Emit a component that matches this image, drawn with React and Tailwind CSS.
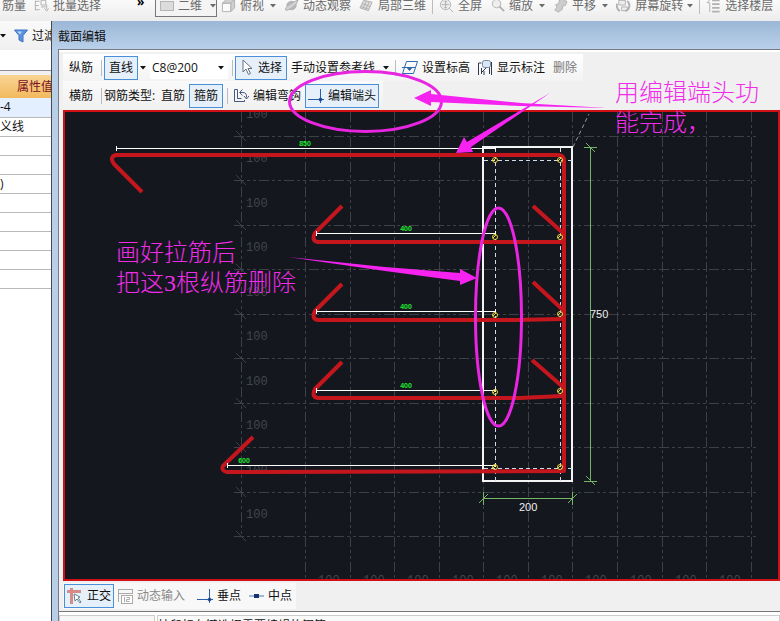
const GRID_X = [305, 350, 394, 439, 483, 528, 572, 617, 662, 706, 751];
const GRID_Y = [136, 180, 225, 269, 314, 358, 403, 447, 492, 536];

const NODES = [
  [495, 160], [560, 160], [495, 237], [560, 237], [495, 315],
  [560, 314], [495, 392], [560, 391], [495, 467], [560, 467],
];

// [x start, y, label x, label]
const DIMS = [
  [117, 149, 305, "850"],
  [317, 234, 406, "400"],
  [317, 312, 406, "400"],
  [317, 391, 406, "400"],
  [228, 466, 244, "600"],
];

const REBARS = [
  "M142 192 L114 164 Q109 157 116 155 H558 Q564 155 564 161 V471 L227 472 Q221 471 223 466 L253 437",
  "M342 206 L315 233 Q311 241 318 242 H562",
  "M342 284 L315 311 Q311 319 318 320 H515 L562 319",
  "M342 362 L315 389 Q311 397 318 398 H520 L562 396",
  "M533 206 L563 233",
  "M533 282 L563 310",
  "M532 360 L563 387",
];

const PROPS = ["", "", ")", "", "", "", "", ""];

// grey view-toolbar icons, 16x16
const ICONS = {
  batch: <path d="M1.500 3v10M1 3.500h5M1 8h4M1 12.500h5M7.500 2.500h5v5h-5zM7.500 9.500h5M13.500 7v5M11 11l2.500 3 2-3" />,
  cube: <><path d="M1.500 5.500h9v9h-9z" fill="#fafafa" /><path d="M1.500 5.500l4-4h9l-4 4zM10.500 14.500l4-4v-9l-4 4z" fill="#cfcfcf" /></>,
  orbit: <><ellipse cx="8" cy="8" rx="5" ry="4.500" fill="#b8b8b8" /><path d="M2 13Q0 11 6 7T15 2Q15 6 9 10T2 13z" fill="#d0d0d0" /></>,
  part: <><path d="M5 2.500l9 2-4 9-9-3z" fill="#dedede" /><path d="M8 3L4 11.500M11 4L7 12.500M3 6l9 3M1.500 9l9 3" /></>,
  full: <><circle cx="7" cy="7" r="5.500" fill="#eee" /><path d="M7 3v8M3 7h8M5.500 4.500L7 3l1.500 1.500M5.500 9.500L7 11l1.500-1.500M11 11l4 4" /></>,
  zoom: <><circle cx="7" cy="6" r="4.500" fill="#eee" /><path d="M10 9l5 5" strokeWidth="2" /></>,
  pan: <path d="M2 13l2-3-1-3 3-1 1-4 3-1 5 3-2 4-3 1v3l-4 3z" fill="#cdcdcd" />,
  rotate: <><path d="M3 2.500h7v5H3zM6 9.500h6v4H6z" fill="#eee" /><path d="M12 3q4 4 1 9l-3 2M1 6q-1 5 3 8" strokeWidth="2" /></>,
  floor: <><path d="M6.500 2.500h8M6.500 6.500h8M6.500 10.500h8M6.500 14.500h8" strokeWidth="2" /><path d="M4 2L1 5h3v10" /></>,
};

function ViewIcon({ name }) {
  return (
    <svg className="mr-1 shrink-0" width="15" height="15" viewBox="0 0 16 16" fill="none" stroke="#b0b0b0">
      {ICONS[name]}
    </svg>
  );
}

function Caret({ className = "" }) {
  return (
    <svg className={`shrink-0 ${className}`} width="6" height="4" viewBox="0 0 6 4">
      <path d="M0 0h6L3 3.500z" fill="currentColor" />
    </svg>
  );
}

function Sep({ className = "" }) {
  return <div className={`w-px shrink-0 bg-[#b9bcc2] ${className}`} />;
}

function Tool({ children, active, className = "" }) {
  return (
    <button type="button"
      className={`flex h-[24px] shrink-0 items-center whitespace-nowrap
        ${active ? "border border-[#4a90d9] bg-[#e6f0fa]" : ""} ${className}`}>
      {children}
    </button>
  );
}

function TopBar() {
  return (
    <div className="flex h-[21px] items-start overflow-hidden bg-gradient-to-b from-[#fafafa] to-[#ececed] text-[#6b6b6b]">
      <div className="-mt-1.5 flex h-[23px] shrink-0 items-center whitespace-nowrap">
        <button type="button" className="ml-0.5">筋量</button>
        <button type="button" className="ml-2 flex items-center"><ViewIcon name="batch" />批量选择</button>
        <span className="ml-9 w-[18px] self-start font-bold text-black">»</span>
        <button type="button" className="flex h-[23px] w-[62px] items-center border border-[#777] bg-[#f4f4f4] pl-1">
          <span className="mr-1 h-[10px] w-[14px] border border-[#b5b5b5] bg-[#dcdcdc]" />
          二维
          <Caret className="ml-2" />
        </button>
        <button type="button" className="ml-1 flex items-center"><ViewIcon name="cube" />俯视<Caret className="ml-1.5" /></button>
        <button type="button" className="ml-2 flex items-center"><ViewIcon name="orbit" />动态观察</button>
        <button type="button" className="ml-2 flex items-center"><ViewIcon name="part" />局部三维</button>
        <Sep className="ml-1.5 h-[16px]" />
        <button type="button" className="ml-1.5 flex items-center"><ViewIcon name="full" />全屏</button>
        <button type="button" className="ml-2 flex items-center"><ViewIcon name="zoom" />缩放<Caret className="ml-1.5" /></button>
        <button type="button" className="ml-2 flex items-center"><ViewIcon name="pan" />平移<Caret className="ml-1.5" /></button>
        <button type="button" className="ml-2 flex items-center"><ViewIcon name="rotate" />屏幕旋转<Caret className="ml-1" /></button>
        <Sep className="ml-1.5 h-[16px]" />
        <button type="button" className="ml-1.5 flex items-center"><ViewIcon name="floor" />选择楼层</button>
      </div>
    </div>
  );
}

function PropertyPanel() {
  return (
    <aside className="w-[51px] shrink-0 overflow-hidden whitespace-nowrap bg-white">
      <div className="flex h-[29px] items-center bg-gradient-to-b from-[#fafafa] to-[#f0f0f0]">
        <Caret />
        <button type="button" className="ml-2 flex shrink-0 items-center">
          <svg className="mr-1 shrink-0" width="14" height="14" viewBox="0 0 14 14">
            <path d="M.500 1h13L9 6.500V13l-4-2V6.500z" fill="#5d93dd" stroke="#3c74c4" />
            <path d="M3 2.500h5L6 5.500z" fill="#b9d5f7" />
          </svg>
          过滤
        </button>
      </div>
      <div className="h-[21px] border-b border-[#8d8d99]" />
      <div className="h-[4px] bg-[#f0f0f0]" />
      <table className="w-full border-collapse">
        <thead>
          <tr className="h-[23px] bg-gradient-to-b from-[#f9d594] to-[#f2b95c]">
            <th className="p-0 pl-[17px] text-left font-normal text-[#7a1020]"><div className="w-[34px] overflow-hidden">属性值</div></th>
          </tr>
        </thead>
        <tbody>
          <tr className="h-[19px] border-b border-[#b9b9b9] bg-[#e3efff]"><td className="p-0 leading-[16px]">-4</td></tr>
          <tr className="h-[19px] border-b border-[#b9b9b9]"><td className="p-0 leading-[16px]">义线</td></tr>
          {PROPS.map((p, i) => (
            <tr key={i} className="h-[19px] border-b border-[#b9b9b9]"><td className="p-0 leading-[16px]">{p}</td></tr>
          ))}
        </tbody>
      </table>
    </aside>
  );
}

function PerpIcon({ className = "" }) {
  return (
    <svg className={`shrink-0 ${className}`} width="16" height="16" viewBox="0 0 16 16" fill="none" stroke="#2a5ca8">
      <path d="M0 11.500h16M12.500 1v14" />
      <circle cx="12.500" cy="11.500" r="1.500" fill="#173e7d" />
    </svg>
  );
}

function DialogTools() {
  return (
    <div className="bg-[#f0f0f0] pl-1 pt-0.5">
      <div className="flex h-[27px] w-fit items-center bg-gradient-to-b from-white to-[#f3f3f3] pr-1.5">
        <button type="button" className="ml-1.5 shrink-0">纵筋</button>
        <Sep className="ml-2 h-[16px]" />
        <Tool active className="ml-0.5 px-1">直线</Tool>
        <Caret className="ml-0.5" />
        <div className="ml-1 flex h-[22px] w-[78px] items-center bg-white">
          <select aria-label="钢筋规格" className="w-full appearance-none bg-transparent pl-0.5 outline-none">
            <option>C8@200</option>
          </select>
          <Caret className="mr-1" />
        </div>
        <Sep className="ml-1 h-[16px]" />
        <Tool active className="ml-0.5 px-1">
          <svg className="mr-1 shrink-0" width="14" height="17" viewBox="0 0 14 17" fill="#fff" stroke="#69717c">
            <path d="M3 1v12l3-3 2.500 5.500 2-1-2.500-5h4z" />
          </svg>
          选择
        </Tool>
        <Tool className="ml-1">手动设置参考线<Caret className="ml-2" /></Tool>
        <Sep className="ml-1.5 h-[16px]" />
        <Tool className="ml-1.5">
          <svg className="mr-1 shrink-0" width="16" height="16" viewBox="0 0 16 16" fill="none" stroke="#2f69ad">
            <path d="M4.500 1.500h11l-4 12h-11zM0 7.500h13" />
            <path d="M5 7.500h5l-2.500 3z" fill="#2f69ad" />
          </svg>
          设置标高
        </Tool>
        <Tool className="ml-2">
          <svg className="mr-1 shrink-0" width="15" height="17" viewBox="0 0 15 17" fill="none" stroke="#303a4d">
            <path d="M.500 16V4h3M3.500 15V9M13.500 16V3M11.500 7v8M3 14l6-6M6 16v-4" />
            <rect x="4.500" y="1.500" width="8" height="7" rx="2" fill="#dce6f2" stroke="#6f89aa" />
          </svg>
          显示标注
        </Tool>
        <Tool className="ml-2 text-[#777]">删除</Tool>
      </div>
      <div className="flex h-[29px] w-fit items-center bg-gradient-to-b from-[#fafafa] to-[#f0f0f0] pr-1">
        <button type="button" className="ml-1.5 shrink-0">横筋</button>
        <Sep className="ml-2 h-[16px]" />
        <span className="ml-0.5 w-[57px] shrink-0 whitespace-nowrap">钢筋类型:</span>
        <Tool>直筋</Tool>
        <Tool active className="ml-1 px-1">箍筋</Tool>
        <Sep className="ml-1 h-[16px]" />
        <Tool className="ml-1.5">
          <svg className="mr-1 shrink-0" width="15" height="15" viewBox="0 0 15 15" fill="none" stroke="#44597f">
            <path d="M3.500 1.500h-3v12h10V12M3.500 1.500v9h4" />
            <path d="M6 4.500h3q4 0 3.500 5M8.500 1.500L5.500 4.500l3 3M10 8l2.500 3L15 8" />
          </svg>
          编辑弯钩
        </Tool>
        <Tool active className="ml-1 px-0.5"><PerpIcon className="mr-1" />编辑端头</Tool>
      </div>
    </div>
  );
}

function SectionCanvas() {
  return (
    <div className="ml-1 border-2 border-[#d01015] bg-[#14171e]">
      <svg className="block h-auto w-full" viewBox="65 112 713 467" fill="none">
        <g stroke="#3d4046" strokeDasharray="10 3 3 3 3 3">
          <path d="M241.500 112V536" />
          {GRID_X.map(x => <path key={x} d={`M${x + 0.5} 112V579`} />)}
          {GRID_Y.map(y => <path key={y} d={`M234 ${y + 0.5}H757`} />)}
        </g>
        <g stroke="#3d4046">
          {GRID_Y.map(y => <path key={y} d={`M236 ${y - 5}l10 10`} />)}
        </g>
        <g fill="#43464c" className="font-['Liberation_Mono',monospace] text-[12px]">
          {GRID_Y.map(y => <text key={y} x="246" y={y - 18}>100</text>)}
          {GRID_X.slice(0, 10).map(x => <text key={x} x={x + 13} y="584">100</text>)}
        </g>

        {/* concrete outline and cover lines */}
        <path d="M573 147l16-33" stroke="#999" strokeDasharray="4 3" />
        <rect x="483" y="147" width="89" height="334" stroke="#f4f4f4" strokeWidth="2" />
        <path d="M495.500 148V481M560.500 148V481M484 160.500H573M484 468.500H573" stroke="#cfdde8" strokeDasharray="4 3" />

        {/* outer dimensions */}
        <g stroke="#74b566">
          <path d="M590.500 147V481M584 147.500h13M584 481.500h13M586 143l9 9M586 476l9 9" />
          <path d="M483 498.500H573M483.500 492v13M572.500 492v13M479 503l9-9M568 503l9-9" />
        </g>
        <g fill="#f0f0f0" className="font-['Liberation_Sans',sans-serif] text-[11px]">
          <text x="590" y="318">750</text>
          <text x="519" y="511">200</text>
        </g>

        <g stroke="#c5161e" strokeWidth="4" strokeLinejoin="round">
          {REBARS.map(d => <path key={d} d={d} />)}
        </g>

        {DIMS.map(([x, y, lx, label]) => (
          <g key={y}>
            <path d={`M${x} ${y - 0.5}H495M${x - 0.5} ${y - 3}v5M495.500 ${y - 3}v4`} stroke="#fff" />
            <text x={lx} y={y - 3} textAnchor="middle" fill="#1fe82f"
              className="font-['Liberation_Sans',sans-serif] text-[7px] font-bold">{label}</text>
          </g>
        ))}
        {NODES.map(([x, y]) => (
          <g key={`${x}-${y}`} stroke="#e8d648">
            <circle cx={x} cy={y} r="2.500" />
            <path d={`M${x - 2} ${y + 1}l3-3`} />
          </g>
        ))}
      </svg>
    </div>
  );
}

function SnapBar() {
  return (
    <div className="flex h-[30px] items-center bg-[#f0f0f0] pl-1">
      <div className="flex h-[26px] items-center bg-[#f8f8f8] pr-1">
        <Tool active className="ml-px px-0.5">
          <svg className="mr-1 shrink-0" width="16" height="16" viewBox="0 0 16 16" fill="none">
            <path d="M0 3.500h14M4.500 0v16" stroke="#d58b88" strokeWidth="3" />
            <path d="M7 6l1 7 2-2 3 4 1-1-3-4 2-1z" fill="#fff" stroke="#69808c" />
          </svg>
          正交
        </Tool>
        <Tool className="ml-1 text-[#888]">
          <svg className="mr-1 shrink-0" width="15" height="15" viewBox="0 0 15 15" fill="none" stroke="#aaa">
            <path d="M0 .500h15M0 4.500h15M.500 0v13M14.500 0v5" />
            <rect x="3.500" y="6.500" width="11" height="8" fill="#fff" />
            <path d="M6.500 8v5M8.500 8.500h3v2h-3v2h3" />
          </svg>
          动态输入
        </Tool>
        <Tool className="ml-3"><PerpIcon className="mr-1" />垂点</Tool>
        <Tool className="ml-2">
          <svg className="mr-1 shrink-0" width="15" height="6" viewBox="0 0 15 6">
            <path d="M0 3h15" stroke="#4976b5" />
            <rect x="5" y="1" width="5" height="4" fill="#16336b" />
          </svg>
          中点
        </Tool>
      </div>
    </div>
  );
}

function Annotations() {
  return (
    <svg className="pointer-events-none absolute left-0 top-0 h-auto w-full" viewBox="0 0 780 621" fill="none">
      <g stroke="#e825e0" strokeWidth="3">
        <ellipse cx="365.500" cy="101.500" rx="76" ry="30" />
        <ellipse cx="498.500" cy="317" rx="23" ry="109" />
      </g>
      <g fill="#f522f0">
        <path d="M414 98l17-8v4l90 9 86 5-87-2-89-4v4z" />
        <path d="M456 153l8-16 3 5 83-49-79 54 2 5z" />
        <path d="M477 278l-17 7v-4l-75-10-97-14 97 10 75 6v-4z" />
      </g>
      <g fill="#f02cea" className="font-['Liberation_Serif','Noto_Sans_CJK_SC',serif] text-[24px] font-light">
        <text x="615" y="101">用编辑端头功</text>
        <text x="615" y="131">能完成，</text>
        <text x="116" y="261">画好拉筋后</text>
        <text x="116" y="291">把这3根纵筋删除</text>
      </g>
    </svg>
  );
}

export default function App() {
  return (
    <div className="relative min-h-screen overflow-hidden bg-white font-['Open_Sans','Noto_Sans_CJK_SC',sans-serif] text-[12px] leading-[16px] text-[#111]">
      <TopBar />
      <div className="flex max-h-[calc(100vh-21px)] overflow-hidden">
        <PropertyPanel />
        <section className="min-w-0 flex-1 border-l border-[#444a52] bg-[#b9cfe8]">
          <h1 className="flex h-[28px] items-center bg-gradient-to-b from-[#9bb7d6] to-[#b9d0ea] pl-1.5 pt-1">截面编辑</h1>
          <div className="ml-1.5 border-l border-t border-[#777b85] bg-[#f0f0f0]">
            <div className="border-t-2 border-white">
              <DialogTools />
            </div>
            <SectionCanvas />
            <SnapBar />
            <div className="border-t border-[#777] bg-white pt-[3px]">
              <div className="flex h-[24px] gap-0.5">
                <div className="w-[96px] border border-[#ccc] bg-[#f7f7f7]" />
                <div className="flex-1 border border-[#ccc] bg-[#fafafa] pt-0.5">按鼠标左键选择需要编辑的钢筋</div>
              </div>
            </div>
          </div>
        </section>
      </div>
      <Annotations />
    </div>
  );
}
